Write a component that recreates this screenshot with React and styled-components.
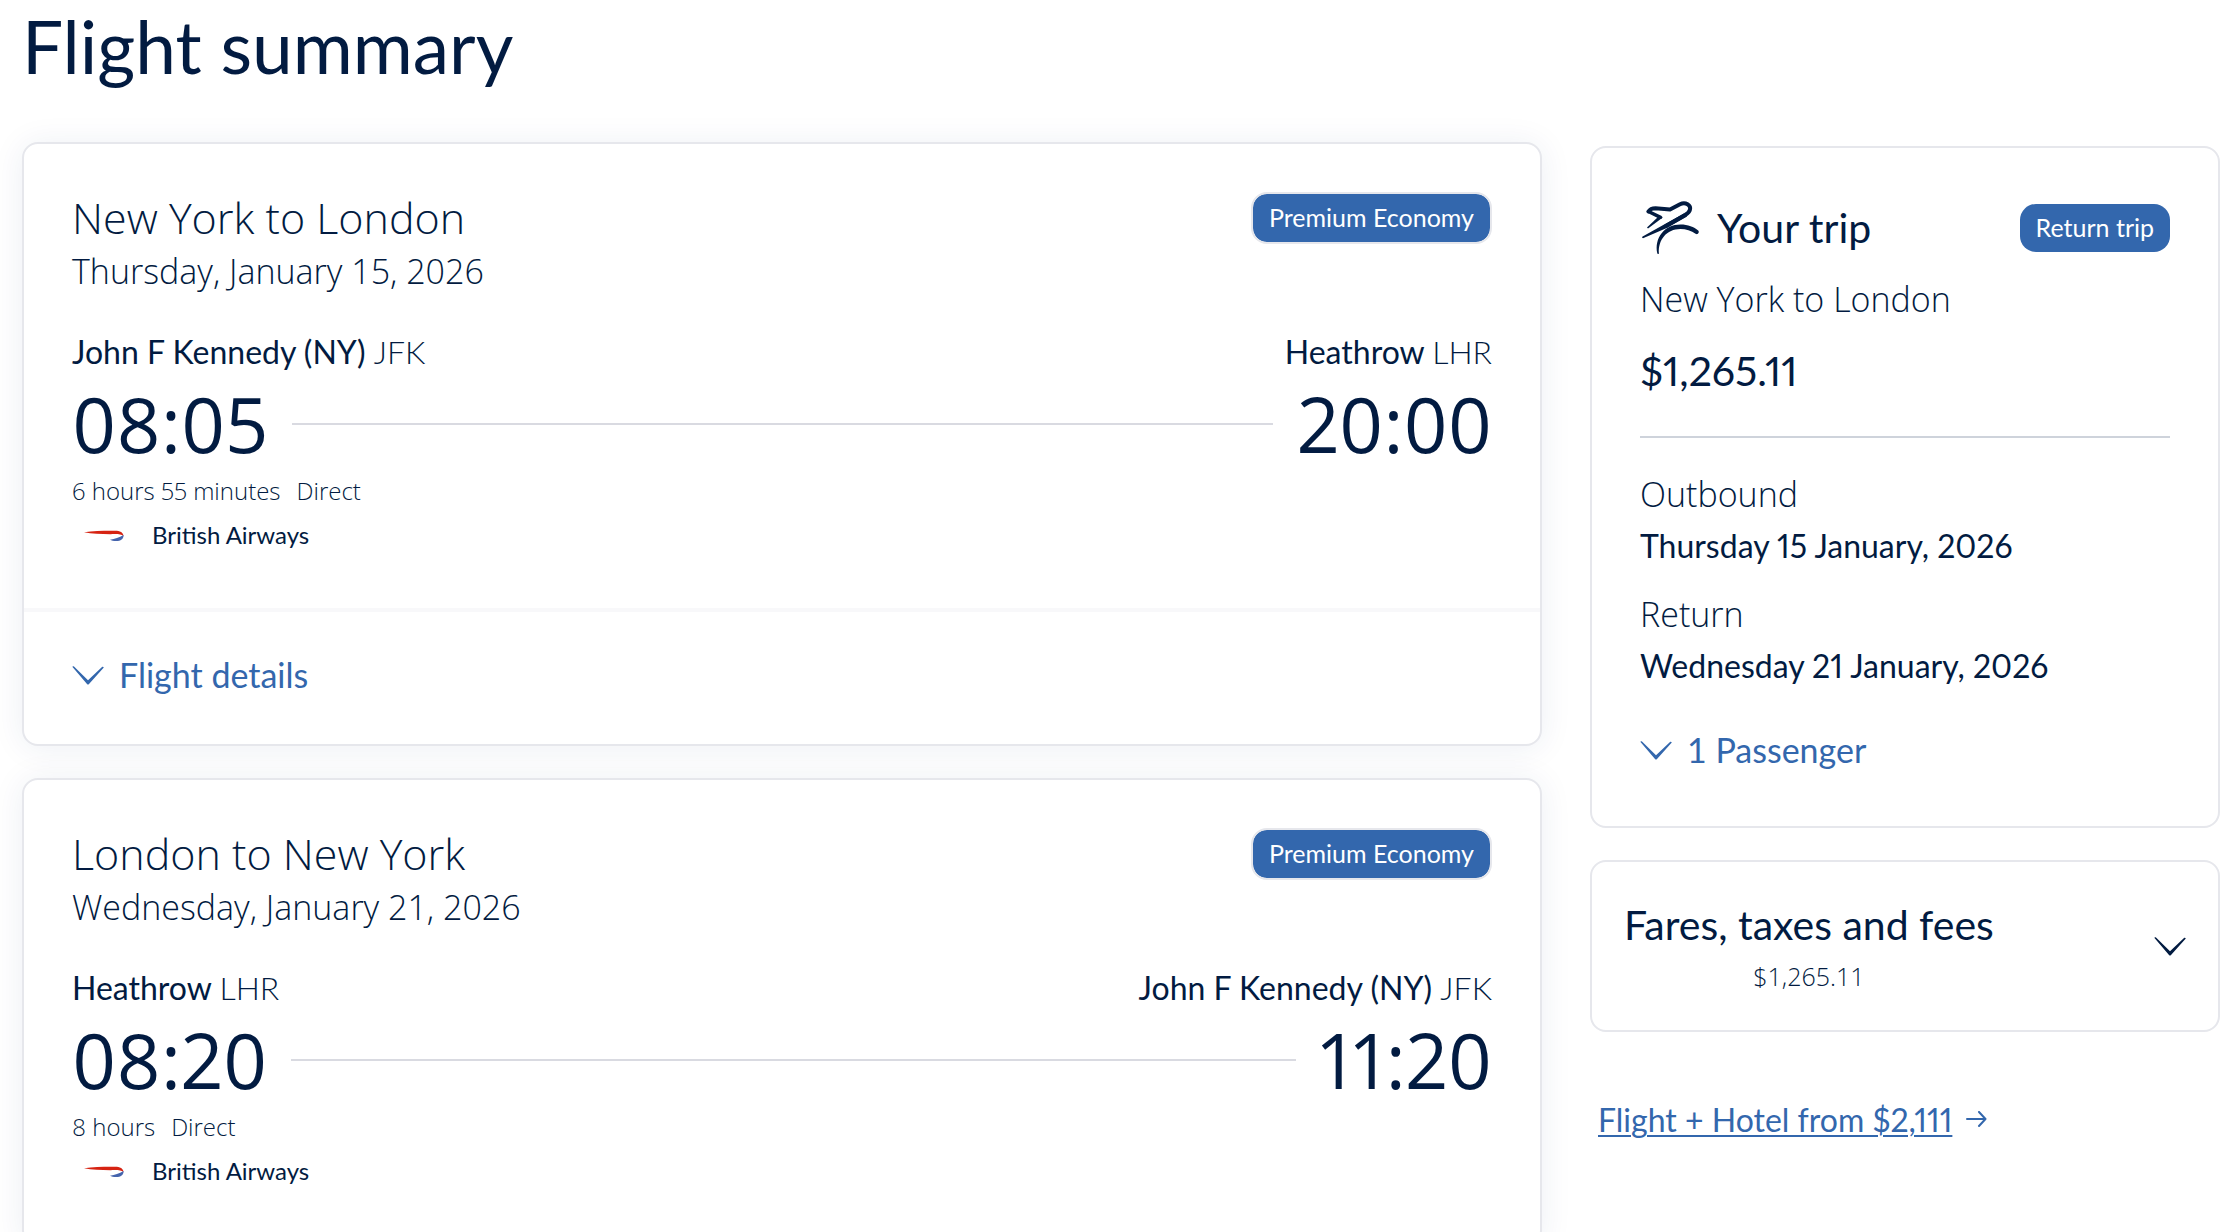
import React from 'react';
import styled, { createGlobalStyle } from 'styled-components';

const navy = '#021b41';
const blue = '#3367ad';
const display = 'Lato, "Open Sans", sans-serif';
const light = '"Open Sans", "Noto Sans", sans-serif';

const GlobalStyle = createGlobalStyle`
  * {
    box-sizing: border-box;
  }

  body {
    margin: 0;
    background: #fff;
    color: ${navy};
    font-family: ${display};
    font-variant-numeric: proportional-nums;
  }

  h1, h2, h3, p, dl, dt, dd {
    margin: 0;
    font-weight: 400;
  }
`;

const Page = styled.div`
  height: 100vh;
  overflow: hidden;
  padding: 0 18px 0 22px;
`;

const Title = styled.h1`
  margin-bottom: 50px;
  font-size: 73px;
  line-height: 92px;
`;

const Columns = styled.div`
  display: grid;
  grid-template-columns: 152fr 63fr;
  column-gap: 48px;
  align-items: start;
`;

const FlightList = styled.main`
  display: flex;
  flex-direction: column;
  gap: 32px;
`;

const Sidebar = styled.aside`
  display: flex;
  flex-direction: column;
  align-items: stretch;
  padding-top: 4px;
`;

const Card = styled.section`
  background: #fff;
  border: 2px solid #e6e7ec;
  border-radius: 16px;
`;

const FlightCard = styled(Card)`
  box-shadow: 0 2px 32px rgba(20, 50, 110, 0.08);
`;

const FlightBody = styled.div`
  padding: 48px 48px 46px;
`;

const CardHead = styled.div`
  display: flex;
  justify-content: space-between;
  align-items: flex-start;
`;

const Route = styled.h2`
  font-family: ${light};
  font-variant-numeric: normal;
  font-weight: 300;
  font-size: 43px;
  line-height: 52px;
`;

const LightText = styled.p`
  font-family: ${light};
  font-variant-numeric: normal;
  font-weight: 300;
  font-size: 34px;
  line-height: 54px;
`;

const Badge = styled.span`
  display: block;
  padding: 0 16px 2px;
  border-radius: 16px;
  border: ${(props) => (props.$outlined ? '2px solid #e6e7ec' : 'none')};
  background: ${blue};
  background-clip: padding-box;
  color: #fff;
  font-size: 25px;
  line-height: 46px;
  white-space: nowrap;
`;

const Airports = styled.div`
  display: flex;
  justify-content: space-between;
  margin-top: 33px;
  font-size: 32px;
  line-height: 42px;
`;

const Code = styled.span`
  font-weight: 300;
`;

const Times = styled.div`
  display: flex;
  align-items: center;
  gap: 24px;
  font-family: ${light};
  font-size: 76px;
  line-height: 101px;
`;

const Track = styled.div`
  flex: 1;
  height: 2px;
  background: #d9dae1;
`;

const Duration = styled.div`
  display: flex;
  gap: 16px;
  font-family: ${light};
  font-weight: 300;
  font-size: 24px;
  line-height: 34px;
`;

const Carrier = styled.div`
  display: flex;
  align-items: center;
  gap: 28px;
  padding-left: 12px;
  font-size: 24px;
  line-height: 54px;
`;

const FlightFooter = styled.div`
  padding: 41px 48px 47px;
  border-top: 4px solid #f8f8fa;
`;

const ToggleButton = styled.button`
  display: flex;
  align-items: center;
  gap: 15px;
  padding: 0;
  border: 0;
  background: none;
  color: ${blue};
  font-family: inherit;
  font-size: 34px;
  line-height: 44px;
  cursor: pointer;
`;

const TripCard = styled(Card)`
  padding: 48px 48px 54px;
`;

const TripHead = styled.div`
  display: flex;
  align-items: center;
  justify-content: space-between;
  height: 64px;
  margin-bottom: 12px;
`;

const TripTitle = styled.h2`
  display: flex;
  align-items: center;
  gap: 17px;
  font-size: 41px;
  line-height: 60px;
`;

const TripPrice = styled.p`
  margin-top: 15px;
  padding-bottom: 35px;
  border-bottom: 2px solid #ced3db;
  font-size: 41px;
  line-height: 60px;
`;

const Dates = styled.dl`
  display: grid;
  gap: 16px;
  margin: 29px 0 37px;
`;

const DateLabel = styled.dt`
  font-family: ${light};
  font-weight: 300;
  font-size: 34px;
  line-height: 54px;
`;

const DateValue = styled.dd`
  font-size: 32px;
  line-height: 50px;
`;

const FaresCard = styled(Card)`
  margin-top: 32px;
`;

const FaresButton = styled.button`
  display: flex;
  align-items: center;
  justify-content: space-between;
  width: 100%;
  padding: 33px 32px;
  border: 0;
  background: none;
  color: ${navy};
  font-family: inherit;
  cursor: pointer;
`;

const FaresText = styled.span`
  display: grid;
  justify-items: center;
  font-size: 41px;
  line-height: 60px;
`;

const FaresTotal = styled.span`
  font-family: ${light};
  font-variant-numeric: normal;
  font-weight: 300;
  font-size: 25px;
  line-height: 42px;
`;

const HotelOffer = styled.div`
  display: flex;
  align-items: center;
  gap: 14px;
  margin-top: 66px;
  padding-left: 8px;
  color: ${blue};
  font-size: 32px;
  line-height: 44px;
`;

const HotelLink = styled.a`
  color: inherit;
  text-decoration: underline;
  text-decoration-thickness: 2px;
  text-underline-offset: 3px;
`;

const ChevronIcon = () => (
  <svg width="32" height="19" viewBox="0 0 32 19" fill="currentColor" aria-hidden="true">
    <path d="M0.3 0.8C0.8 0.1 1.4 0 2 0.5L16 14.2L30 1.1C30.7 0.6 31.3 0.7 31.8 1.5L17 18C16.3 18.8 15.7 18.8 15 18Z" />
  </svg>
);

const ArrowIcon = () => (
  <svg width="21" height="18" viewBox="0 0 21 18" fill="none" stroke="currentColor" strokeLinecap="round" strokeLinejoin="round" aria-hidden="true">
    <path d="M1 8H19" strokeWidth="2" />
    <path d="M13 1L19.5 8L13 15" strokeWidth="2" />
  </svg>
);

const PlaneIcon = () => (
  <svg width="60" height="56" viewBox="0 0 60 56" fill="none" stroke="currentColor" strokeLinejoin="round" strokeLinecap="round" aria-hidden="true">
    <path d="M8.5 11.5C10 9 12.5 8.2 15.5 8.2L30 9.4L40 4.2C45.5 1.5 51.2 5 49.9 9.8C49.4 12 48 13.3 45.5 14.8L26 26" strokeWidth="4" />
    <path d="M8.5 11.5L20.5 17.3" strokeWidth="3.5" />
    <path d="M19 16L22.8 17.5L8 28.4L7 27.5Z" fill="currentColor" stroke="none" />
    <path d="M44 13.5L47 16.5L26.8 28L3 38.2C2 38 1.7 37.2 2.6 36.6L25 24Z" fill="currentColor" stroke="none" />
    <path d="M17.3 53.6C14 38 24.5 24.6 40.5 24.6C48 24.6 54 27 58.2 30.6C59.6 32 58.2 34.8 56 34C51 30.6 46 29 40.5 29C26.5 29 18 40 18.9 53.4C18.6 54.2 17.7 54.3 17.3 53.6Z" fill="currentColor" stroke="none" />
  </svg>
);

const SpeedmarqueIcon = () => (
  <svg width="40" height="14" viewBox="0 -2 40 14" aria-hidden="true">
    <path d="M0 2.2C10 0.9 22 0.5 31 0.7C36 0.8 39.3 2.4 39.5 6C37.5 4.6 35 4.1 31 4.1C20 4.3 9 3.8 0 2.2Z" fill="#d62312" />
    <path d="M26 9.8C31 8.8 35 7.6 39.6 5C39.8 9 36.5 11.2 32 11.1C29.5 11 27.4 10.5 26 9.8Z" fill="#4564ad" />
  </svg>
);

const flights = [
  {
    route: 'New York to London',
    date: 'Thursday, January 15, 2026',
    from: { name: 'John F Kennedy (NY)', code: 'JFK', time: '08:05' },
    to: { name: 'Heathrow', code: 'LHR', time: '20:00' },
    duration: '6 hours 55 minutes',
    hasDetails: true,
  },
  {
    route: 'London to New York',
    date: 'Wednesday, January 21, 2026',
    from: { name: 'Heathrow', code: 'LHR', time: '08:20' },
    to: { name: 'John F Kennedy (NY)', code: 'JFK', time: '11:20' },
    duration: '8 hours',
    hasDetails: false,
  },
];

const Flight = ({ flight }) => {
  const { route, date, from, to, duration, hasDetails } = flight;

  return (
    <FlightCard>
      <FlightBody>
        <CardHead>
          <div>
            <Route>{route}</Route>
            <LightText>{date}</LightText>
          </div>
          <Badge $outlined>Premium Economy</Badge>
        </CardHead>
        <Airports>
          <span>{from.name} <Code>{from.code}</Code></span>
          <span>{to.name} <Code>{to.code}</Code></span>
        </Airports>
        <Times>
          <time>{from.time}</time>
          <Track />
          <time>{to.time}</time>
        </Times>
        <Duration>
          <span>{duration}</span>
          <span>Direct</span>
        </Duration>
        <Carrier>
          <SpeedmarqueIcon />
          <span>British Airways</span>
        </Carrier>
      </FlightBody>
      {hasDetails && (
        <FlightFooter>
          <ToggleButton type="button">
            <ChevronIcon />
            Flight details
          </ToggleButton>
        </FlightFooter>
      )}
    </FlightCard>
  );
};

const App = () => (
  <>
    <GlobalStyle />
    <Page>
      <Title>Flight summary</Title>
      <Columns>
        <FlightList>
          {flights.map((flight) => (
            <Flight key={flight.route} flight={flight} />
          ))}
        </FlightList>
        <Sidebar>
          <TripCard>
            <TripHead>
              <TripTitle>
                <PlaneIcon />
                Your trip
              </TripTitle>
              <Badge>Return trip</Badge>
            </TripHead>
            <LightText>New York to London</LightText>
            <TripPrice>$1,265.11</TripPrice>
            <Dates>
              <div>
                <DateLabel>Outbound</DateLabel>
                <DateValue>Thursday 15 January, 2026</DateValue>
              </div>
              <div>
                <DateLabel>Return</DateLabel>
                <DateValue>Wednesday 21 January, 2026</DateValue>
              </div>
            </Dates>
            <ToggleButton type="button">
              <ChevronIcon />
              1 Passenger
            </ToggleButton>
          </TripCard>
          <FaresCard>
            <FaresButton type="button">
              <FaresText>
                Fares, taxes and fees
                <FaresTotal>$1,265.11</FaresTotal>
              </FaresText>
              <ChevronIcon />
            </FaresButton>
          </FaresCard>
          <HotelOffer>
            <HotelLink href="#hotel">Flight + Hotel from $2,111</HotelLink>
            <ArrowIcon />
          </HotelOffer>
        </Sidebar>
      </Columns>
    </Page>
  </>
);

export default App;
